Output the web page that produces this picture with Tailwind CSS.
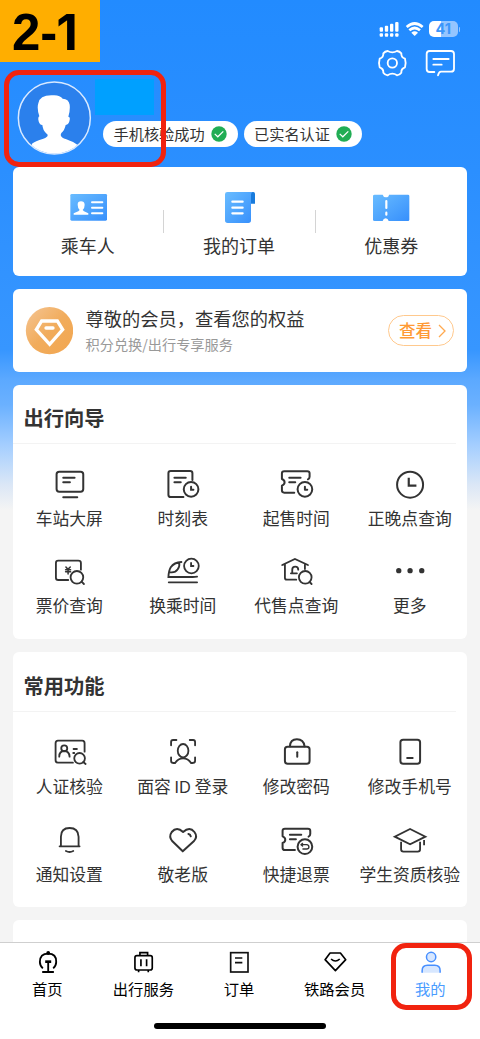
<!DOCTYPE html>
<html lang="zh-CN">
<head>
<meta charset="utf-8">
<title>我的</title>
<script src="https://cdn.jsdelivr.net/npm/@tailwindcss/browser@4"></script>
</head>
<body class="bg-[#f4f4f4]">
<div class="relative flex h-[1039px] w-[480px] flex-col overflow-hidden bg-[linear-gradient(180deg,#228bff_0px,#2b8fff_170px,#3796ff_350px,#5ca9ff_380px,#6bb1ff_405px,#a4ceff_445px,#dbe7f6_485px,#f4f4f4_510px)] font-['Noto_Sans_CJK_SC',sans-serif] text-[#333]">

  <!-- Header -->
  <header class="h-[167px] shrink-0 pt-5">
    <div class="flex h-[18px] justify-end pr-[20px]">
      <svg class="h-[18px] w-[46px]" viewBox="417 60 138 54" fill="#fff">
        <rect x="419" y="82" width="10" height="13" rx="3"/><rect x="434.500" y="77" width="10" height="18" rx="3"/><rect x="450" y="71" width="10" height="24" rx="3"/><rect x="465.500" y="66" width="10" height="29" rx="3"/>
        <rect x="419" y="100" width="10" height="10" rx="3"/><rect x="434.500" y="100" width="10" height="10" rx="3"/><rect x="450" y="100" width="10" height="10" rx="3"/><rect x="465.500" y="100" width="10" height="10" rx="3"/>
        <g fill="none" stroke="#fff" stroke-width="8"><path d="M500 81Q524 60 548 81"/><path d="M508 91Q524 77 540 91"/></g><path d="M514 98q10-8 20 0l-10 10z"/>
      </svg>
      <div class="mt-[1px] ml-1 flex h-4 items-center">
        <div class="flex h-4 w-[28.5px] items-center justify-center rounded-[5px] bg-[linear-gradient(90deg,#fff_43%,#94c5ff_43%)] font-['Inter','Liberation_Sans',sans-serif] text-[14.5px] leading-4 font-bold text-[#3b96fb]">41</div>
        <div class="ml-[1px] h-[5px] w-[1.5px] rounded-r-full bg-[#94c5ff]"></div>
      </div>
    </div>
    <div class="mt-[10px] flex h-[30px] justify-end gap-4 pr-6">
      <svg class="h-[30px] w-[31px]" viewBox="411 144 93 90" fill="none" stroke="#fff" stroke-width="5.500" stroke-linejoin="round"><path d="M443 153Q450 157 457 157Q464 157 471 153Q479 154 484 160Q483 172 495 176Q499 189 495 202Q483 206 484 218Q479 225 471 226Q464 221 457 221Q450 221 443 226Q435 225 430 218Q431 206 419 202Q415 189 419 176Q431 172 430 160Q435 154 443 153Z"/><circle cx="457" cy="189" r="14"/></svg>
      <svg class="h-[30px] w-8" viewBox="552 144 96 90" fill="none" stroke="#fff" stroke-width="5.500" stroke-linecap="round" stroke-linejoin="round"><path d="M583 216h-14q-9 0-9-9v-45q0-9 9-9h64q9 0 9 9v44q0 9-9 9h-30q-6 0-9 11M580 177h46M580 194h25"/></svg>
    </div>
    <div class="mt-[2px] flex pl-[17px]">
      <svg class="h-[76px] w-[75px]" viewBox="51 240 225 228"><defs><clipPath id="avatar-clip"><circle cx="163" cy="354" r="107"/></clipPath></defs><circle cx="163" cy="354" r="107" fill="#2b80ec"/><path clip-path="url(#avatar-clip)" fill="#fff" d="M90 470L96 431Q105 424 130 416Q144 412 143 404L137 398Q129 391 127 375Q117 374 115 359Q114 351 118 349Q110 324 115 310Q119 286 154 286Q179 283 188 296Q206 296 209 314Q211 331 205 350Q211 350 209 360Q207 373 197 375Q194 391 184 399L182 405Q183 413 199 418Q222 426 234 436V470Z"/><circle cx="163" cy="354" r="108" fill="none" stroke="#d9e9ff" stroke-width="4.500"/></svg>
      <div class="ml-[3px]">
        <div class="-mt-[1px] h-[36px] w-[59px] bg-[#00a0ff]"></div>
        <div class="mt-[6px] ml-2 flex gap-[6px] text-[15.2px] leading-6">
          <div class="flex h-[26px] w-[135px] items-center gap-[6px] rounded-full bg-white pl-[10.5px] whitespace-nowrap"><span class="-mt-[2px]">手机核验成功</span>
            <svg class="h-4 w-4 shrink-0" viewBox="0 0 16 16"><circle cx="8" cy="8" r="7.700" fill="#21ad54"/><path d="M3.700 7.900l3.100 2.900 5.500-5.400" fill="none" stroke="#fff" stroke-width="1.200"/></svg></div>
          <div class="flex h-[26px] w-[118px] items-center gap-[6px] rounded-full bg-white pl-[10px] whitespace-nowrap"><span class="-mt-[2px]">已实名认证</span>
            <svg class="h-4 w-4 shrink-0" viewBox="0 0 16 16"><circle cx="8" cy="8" r="7.700" fill="#21ad54"/><path d="M3.700 7.900l3.100 2.900 5.500-5.400" fill="none" stroke="#fff" stroke-width="1.200"/></svg></div>
        </div>
      </div>
    </div>
  </header>

  <main class="flex flex-1 flex-col px-[13px]">
    <!-- Shortcuts -->
    <section class="grid h-[109px] shrink-0 grid-cols-3 rounded-md bg-white pt-[22px] text-center text-[18px] leading-6">
      <div class="relative flex flex-col items-center">
        <svg class="h-9 w-[42px]" viewBox="203 87 126 108"><defs><linearGradient id="blue" x1="0" y1="0" x2="1" y2="1"><stop stop-color="#69bcff"/><stop offset="1" stop-color="#368ffc"/></linearGradient></defs><rect x="210" y="102" width="110" height="80" rx="4" fill="url(#blue)"/><path fill="#fff" d="M220 164v-4l14-6 4-4q-6-6-6-16 0-10 10-10t11 10q0 10-6 16l4 4 13 6v4z"/><path stroke="#fff" stroke-width="6" stroke-linecap="round" d="M275 127h31M275 143.500h31M275 160h31"/></svg>
        <p class="mt-2 mr-[2px]">乘车人</p><i class="absolute top-[21px] right-0 h-[23px] w-px bg-[#d4d4d4]"></i>
      </div>
      <div class="relative flex flex-col items-center">
        <svg class="h-9 w-[42px]" viewBox="657 87 126 108"><path d="M753 96h7q5 0 5 5v30h-12z" fill="#187bdc"/><path d="M682 96h76q-5 2-5 8v77q0 8-8 8h-62q-8 0-8-8v-78q0-7 7-7z" fill="url(#blue)"/><path stroke="#fff" stroke-width="6.500" stroke-linecap="round" d="M697 125h31M697 143h31M697 160h31"/></svg>
        <p class="mt-2 mr-[2px]">我的订单</p><i class="absolute top-[21px] right-0 h-[23px] w-px bg-[#d4d4d4]"></i>
      </div>
      <div class="flex flex-col items-center">
        <svg class="h-9 w-[42px]" viewBox="391 87 126 108"><path fill="url(#blue)" d="M405 104h24q2 8 10 8t9-8h57q4 0 4 4v71q0 4-4 4h-58q-2-8-9-8t-9 8h-24q-5 0-5-4v-71q0-4 5-4z"/><path stroke="#fff" stroke-width="6.500" stroke-linecap="round" d="M440 123v21M440 158v6"/></svg>
        <p class="mt-2">优惠券</p>
      </div>
    </section>

    <!-- Membership -->
    <section class="mt-[13px] flex h-[83px] shrink-0 items-center rounded-md bg-white pr-[13px] pl-3">
      <svg class="h-12 w-12 shrink-0" viewBox="75 440 144 144"><defs><linearGradient id="gold" x1="0" y1="0" x2="1" y2="1"><stop stop-color="#f5c594"/><stop offset=".5" stop-color="#f1ac5c"/><stop offset="1" stop-color="#f2a650"/></linearGradient></defs><circle cx="148.500" cy="511" r="71" fill="url(#gold)"/><path d="M125 482h47l16 26-39 44-40-44zM138 503h21" fill="none" stroke="#fff" stroke-width="10" stroke-linecap="round"/></svg>
      <div class="ml-[12.5px] whitespace-nowrap"><p class="text-[18.25px] leading-[26px]">尊敬的会员，查看您的权益</p><p class="mt-[1px] text-[14.2px] leading-6 text-[#999]">积分兑换/出行专享服务</p></div>
      <div class="ml-auto flex h-[30.5px] w-[66px] items-center rounded-full border border-[#ffc98d] pl-[10px] text-[16.5px] leading-6 font-medium text-[#ff9a35]"><span class="-mt-[2px]">查看</span><svg class="ml-[6px] h-[14px] w-2" viewBox="0 0 8 14" fill="none" stroke="#ffa94f" stroke-width="1.300"><path d="M1 1l6 6-6 6"/></svg></div>
    </section>

    <!-- Travel guide -->
    <section class="mt-[13px] h-[254px] shrink-0 rounded-md bg-white">
      <div class="mr-[11px] flex h-[59px] items-center border-b border-[#f3f3f3] pt-[5px] pl-[10.5px] text-[20.3px] leading-[30px] font-bold">出行向导</div>
      <div class="grid grid-cols-4 gap-y-[25px] pt-6 text-[16.8px] leading-6 whitespace-nowrap [&>div]:flex [&>div]:flex-col [&>div]:items-center [&_p]:mt-[6px] [&_p]:mr-[1px] [&_svg]:h-8 [&_svg]:w-9">
        <div><svg viewBox="155.250 264 108 96" fill="none" stroke="#333" stroke-width="6" stroke-linecap="round"><rect x="169" y="275" width="80" height="60" rx="8"/><path d="M189 293h34M189 307h20M189 352h42"/></svg><p>车站大屏</p></div>
        <div><svg viewBox="495.750 264 108 96" fill="none" stroke="#333" stroke-width="6" stroke-linecap="round"><path d="M551 351h-38q-7 0-7-7v-64q0-7 7-7h58q7 0 7 7v20M524 293h34M524 307h19M574 320v9h7"/><circle cx="574" cy="328" r="22"/></svg><p>时刻表</p></div>
        <div><svg viewBox="116.250 264 108 96" fill="none" stroke="#333" stroke-width="6" stroke-linecap="round" stroke-linejoin="round"><path d="M162 338h-30q-7 0-7-7v-14q8-3 8-10t-8-10v-17q0-6 7-6h69q7 0 7 6v10q0 6-5 8M147 293h34M147 307h18M194 320v9h7"/><circle cx="194" cy="328" r="22"/></svg><p>起售时间</p></div>
        <div><svg viewBox="456.750 264 108 96" fill="none" stroke="#333" stroke-width="6"><circle cx="511" cy="314" r="39"/><path d="M507 293v24h23" stroke-width="6.500"/></svg><p>正晚点查询</p></div>
        <div><svg viewBox="155.250 45 108 96" fill="none" stroke="#333" stroke-width="5.500" stroke-linecap="round"><path d="M204 120h-30q-7 0-7-7v-44q0-7 7-7h60q8 0 8 7v20M244 125l7 7"/><path stroke-width="4.500" d="M197 81l6 7 7-7M196 89h15M196 95h15M203.500 89v13"/><circle cx="230" cy="112" r="19"/></svg><p>票价查询</p></div>
        <div><svg viewBox="495.750 45 108 96" fill="none" stroke="#333" stroke-width="5.500" stroke-linecap="round"><path d="M545 66q-22 1-32 16-6 10-7 29h73q7 0 13-1M507 127h85M511 97q16 2 23-9t4-19M574 69v9h7"/><circle cx="575" cy="78" r="22"/></svg><p>换乘时间</p></div>
        <div><svg viewBox="116.250 45 108 96" fill="none" stroke="#333" stroke-width="5.500" stroke-linecap="round"><path d="M126 75l38-18 39 18M134 73v40q0 6 6 6h28M194 75v12M152 100h18M156 100V89q0-9 9-9t9 9M208 126l6 6"/><circle cx="195" cy="112" r="19"/></svg><p>代售点查询</p></div>
        <div><svg viewBox="456.750 45 108 96" fill="#333"><circle cx="477" cy="92" r="8"/><circle cx="511" cy="92" r="8"/><circle cx="546" cy="92" r="8"/></svg><p>更多</p></div>
      </div>
    </section>

    <!-- Common functions -->
    <section class="mt-[13px] h-[255px] shrink-0 rounded-md bg-white">
      <div class="mr-[11px] flex h-[60px] items-center border-b border-[#f3f3f3] pt-[6px] pl-[10.5px] text-[20.3px] leading-[30px] font-bold">常用功能</div>
      <div class="grid grid-cols-4 gap-y-[25px] pt-6 text-[16.8px] leading-6 whitespace-nowrap [&>div]:flex [&>div]:flex-col [&>div]:items-center [&_p]:mt-[6px] [&_p]:mr-[1px] [&_svg]:h-8 [&_svg]:w-9">
        <div><svg viewBox="155.250 48 108 96" fill="none" stroke="#333" stroke-width="5.500" stroke-linecap="round"><path d="M218 128h-45q-7 0-7-7V70q0-8 7-8h73q7 0 7 8v25M177 110q0-17 15-17t16 17M220 87h10M219 99h3M249 126l7 6"/><circle cx="192" cy="85" r="9"/><circle cx="238" cy="115" r="16"/></svg><p>人证核验</p></div>
        <div><svg viewBox="495.750 48 108 96" fill="none" stroke="#333" stroke-width="5.500" stroke-linecap="round"><path d="M514 76V66q0-6 6-6h10M570 60h10q6 0 6 6v10M514 112v10q0 7 7 7h5q9-14 24-14t24 14h4q8 0 8-7v-10"/><ellipse cx="550" cy="92" rx="16" ry="20"/></svg><p>面容 <span class="font-['Inter',sans-serif] text-[16.5px]">ID</span> 登录</p></div>
        <div><svg viewBox="116.250 48 108 96" fill="none" stroke="#333" stroke-width="6" stroke-linecap="round"><rect x="134" y="80" width="74" height="51" rx="8"/><path d="M149 79q1-21 21-21t23 21"/><path d="M171 97v13"/></svg><p>修改密码</p></div>
        <div><svg viewBox="456.750 48 108 96" fill="none" stroke="#333" stroke-width="6"><rect x="482" y="59" width="59" height="72" rx="8"/><path d="M500 114h21"/></svg><p>修改手机号</p></div>
        <div><svg viewBox="155.250 309 108 96" fill="none" stroke="#333" stroke-width="5.500" stroke-linecap="round"><path d="M178 376h60M182 375v-28q0-26 26-26t27 26v28M197 390q11 6 22 0"/></svg><p>通知设置</p></div>
        <div><svg viewBox="495.750 309 108 96" fill="none" stroke="#333" stroke-width="6" stroke-linecap="round" stroke-linejoin="round"><path d="M549 391L518 361q-12-14-2-28 15-18 34 0 20-18 34 0 11 14-2 28zM566 339q6 1 7 7"/></svg><p>敬老版</p></div>
        <div><svg viewBox="116.250 309 108 96" fill="none" stroke="#333" stroke-width="6" stroke-linecap="round" stroke-linejoin="round"><path d="M164 387h-30q-7 0-7-7v-14q8-3 8-10t-8-10v-17q0-6 7-6h69q7 0 7 6v10q0 6-5 8M149 341h34M149 355h18"/><circle cx="194" cy="377" r="22"/><path stroke-width="4" d="M187 367l-5 4 5 4M184 371h15q7 1 7 7t-7 6h-11"/></svg><p>快捷退票</p></div>
        <div><svg viewBox="456.750 309 108 96" fill="none" stroke="#333" stroke-width="5.500"><path d="M511 324l46 23-46 23-46-23zM484 362v23q0 7 7 7h43q7 0 7-7v-23M553 357v16"/></svg><p>学生资质核验</p></div>
      </div>
    </section>
    <section class="mt-[13px] h-6 shrink-0 rounded-t-md bg-white"></section>
  </main>

  <!-- Bottom navigation -->
  <nav class="absolute inset-x-0 bottom-0 h-[97px] border-t border-[#cfcfcf] bg-white pt-[3px]">
    <div class="grid w-[478px] grid-cols-5 text-[15.3px] leading-[22px] text-black [&>div]:flex [&>div]:flex-col [&>div]:items-center [&_p]:-mt-px [&_svg]:h-8 [&_svg]:w-8">
      <div><svg viewBox="95.400 138 96 96" fill="none" stroke="#000" stroke-width="5.500"><path d="M128 205q-9-8-9-19 0-25 25-25t24 25q0 11-9 19M126 216h35M144 188v27"/><path d="M135 185h18" stroke-width="8"/><circle cx="144" cy="159" r="3" fill="#000"/></svg><p class="mr-px">首页</p></div>
      <div><svg viewBox="382.200 138 96 96" fill="none" stroke="#000" stroke-width="5"><rect x="406" y="167" width="52" height="43" rx="6"/><path d="M421 166v-8h23v8M424 178v21M441 178v21M417 210v7M446 210v7"/></svg><p>出行服务</p></div>
      <div><svg viewBox="669 138 96 96" fill="none" stroke="#111" stroke-width="5"><rect x="692" y="158" width="52" height="58"/><path d="M705 174h22M705 188h22"/></svg><p>订单</p></div>
      <div><svg viewBox="235.800 138 96 96" fill="none" stroke="#000" stroke-width="5" stroke-linejoin="round"><path d="M269 159h31l16 20-31 33-31-33zM272 177q13 12 26 0"/></svg><p>铁路会员</p></div>
      <div class="text-[#4a9cff]"><svg viewBox="522.600 138 96 96" fill="#d7e7ff" stroke="#478fff" stroke-width="4.500"><circle cx="574" cy="171" r="14"/><path stroke="none" d="M547 218v-6q0-16 16-16h22q16 0 16 16v6z"/><path fill="none" d="M547 218v-6q0-16 16-16h22q16 0 16 16v6"/></svg><p>我的</p></div>
    </div>
    <div class="mx-auto mt-6 h-[6px] w-[172px] rounded-full bg-black"></div>
  </nav>

  <!-- Step label and highlight frames -->
  <div class="absolute top-0 left-0 flex h-[61.5px] w-[100px] items-center bg-[#ffae00] pt-[3px] pl-[12px] font-['Liberation_Sans',sans-serif] text-[51px] leading-none font-bold text-black">2-<span class="-ml-[1px] font-['Inter',sans-serif] text-[50px]">1</span></div>
  <div class="absolute top-[70px] left-[4px] h-[97px] w-[161.5px] rounded-[15px] border-[5px] border-[#f1230f]"></div>
  <div class="absolute top-[943px] left-[391px] h-[66.500px] w-[81px] rounded-[15px] border-[5px] border-[#f1230f]"></div>
</div>
</body>
</html>
